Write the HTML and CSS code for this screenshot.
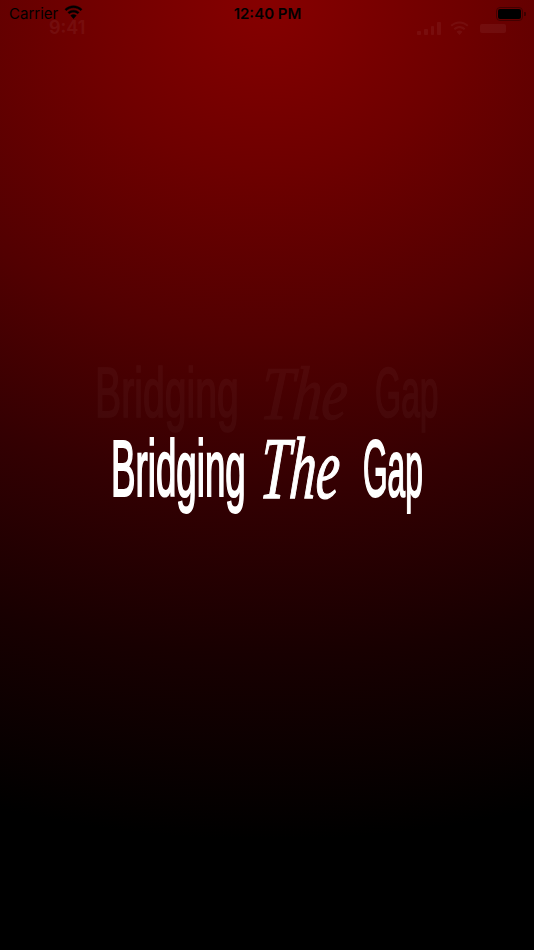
FILE: index.html
```html
<!DOCTYPE html>
<html lang="en">
<head>
<meta charset="utf-8">
<title>Bridging The Gap</title>
<link rel="stylesheet" href="styles.css">
</head>
<body>
<div class="page">
  <header class="status">
    <div class="status-left">
      <span class="carrier">Carrier</span>
      <svg class="wifi" viewBox="0 0 20 15" aria-hidden="true"><path d="M10 2.6c2.9 0 5.600 1.100 7.600 3l1.400-1.500C16.600 1.800 13.400.4 10 .4S3.400 1.800 1 4.100l1.400 1.500c2-1.900 4.700-3 7.600-3z"/><path d="M10 7.200c1.700 0 3.200.6 4.400 1.700l1.500-1.500C14.300 5.900 12.200 5 10 5s-4.300.9-5.900 2.400l1.500 1.500C6.800 7.800 8.300 7.200 10 7.200z"/><path d="M10 9.600c-1.100 0-2.100.4-2.900 1.100L10 14l2.900-3.300c-.8-.7-1.800-1.100-2.900-1.100z"/></svg>
    </div>
    <span class="time">12:40 PM</span>
    <div class="battery"><span class="battery-body"><span class="battery-fill"></span></span><span class="battery-cap"></span></div>
  </header>

  <div class="ghost-status">
    <span class="ghost-time">9:41</span>
    <div class="ghost-right">
      <div class="ghost-bars"><i class="b1"></i><i class="b2"></i><i class="b3"></i><i class="b4"></i></div>
      <svg class="ghost-wifi" viewBox="0 0 20 15" aria-hidden="true"><path d="M10 2.600c2.900 0 5.600 1.100 7.600 3l1.400-1.500C16.600 1.800 13.400.4 10 .4S3.400 1.800 1 4.100l1.400 1.500c2-1.900 4.700-3 7.600-3z"/><path d="M10 7.200c1.700 0 3.200.6 4.400 1.700l1.500-1.500C14.300 5.900 12.200 5 10 5s-4.300.9-5.900 2.400l1.500 1.500C6.800 7.800 8.300 7.200 10 7.200z"/><path d="M10 9.600c-1.100 0-2.100.4-2.900 1.100L10 14l2.900-3.300c-.8-.7-1.800-1.100-2.900-1.100z"/></svg>
      <span class="ghost-battery"></span>
    </div>
  </div>

  <div class="logo logo-ghost">
    <span class="word bridging"><span>Bridging</span></span>
    <span class="word the"><span>The</span></span>
    <span class="word gap"><span>Gap</span></span>
  </div>

  <main class="logo logo-main">
    <span class="word bridging"><span>Bridging</span></span>
    <span class="word the"><span>The</span></span>
    <span class="word gap"><span>Gap</span></span>
  </main>
</div>
</body>
</html>
```
FILE: styles.css
```css
* { box-sizing: border-box; }
html, body { margin: 0; padding: 0; background: #000; }
.page {
  position: relative;
  width: 534px;
  height: 950px;
  overflow: hidden;
  display: flex;
  flex-direction: column;
  background: radial-gradient(ellipse 1000px 840px at 267px 0, #860000 0%, #6e0000 20%, #520001 40%, #340002 58%, #180001 78%, #000 100%);
}
.status {
  display: grid;
  grid-template-columns: 1fr auto 1fr;
  align-items: center;
  height: 28px;
  padding: 0 8px 0 9px;
  color: #000;
  font: 15px/18px Inter, "Liberation Sans", sans-serif;
  flex: none;
}
.status-left { display: flex; align-items: center; gap: 6px; }
.carrier { font-size: 15px; color: #000; }
.wifi { width: 19px; height: 15px; margin-top: -4px; fill: #000; stroke: #000; stroke-width: .5; }
.time { font-weight: 600; font-size: 15px; }
.battery { justify-self: end; display: flex; align-items: center; }
.battery-body {
  display: block;
  width: 27px;
  height: 14px;
  padding: 1px;
  border: 1px solid #420000;
  border-radius: 4px;
}
.battery-fill { display: block; width: 100%; height: 100%; background: #000; border-radius: 2px; }
.battery-cap { width: 2px; height: 4px; background: #3a0000; border-radius: 0 1px 1px 0; margin-left: 1px; }

.ghost-status {
  position: absolute;
  left: 0;
  right: 0;
  top: 18px;
  height: 20px;
  display: flex;
  justify-content: space-between;
  align-items: center;
  padding: 0 28px 0 49px;
  color: #fff;
  opacity: .05;
}
.ghost-time { font: 600 18px/20px Inter, "Liberation Sans", sans-serif; }
.ghost-right { display: flex; align-items: center; gap: 8px; }
.ghost-bars { display: flex; align-items: flex-end; gap: 3px; height: 13px; }
.ghost-bars i { display: block; width: 3.75px; background: #fff; border-radius: 1px; }
.b1 { height: 4px; } .b2 { height: 6px; } .b3 { height: 9px; } .b4 { height: 13px; }
.ghost-wifi { width: 21px; height: 15px; fill: #fff; }
.ghost-battery { display: block; width: 26px; height: 9px; background: #fff; border-radius: 2px; margin-left: 2px; }

.logo {
  display: flex;
  color: #fff;
  line-height: 1;
  white-space: nowrap;
}
.word { display: block; flex: none; }
.word > span { display: inline-block; transform-origin: 0 0; }
.logo-main {
  margin-top: 391px;
  padding-left: 111px;
  height: 100px;
  align-items: flex-start;
}
.logo-main .bridging { width: 153px; }
.logo-main .the { width: 99px; }
.logo-main .gap { width: 60px; }
.logo-main .bridging > span {
  font: 400 79px/100px "Liberation Sans", Arial, sans-serif;
  transform: scaleX(.465);
  -webkit-text-stroke: 2.2px #fff;
}
.logo-main .gap > span {
  font: 400 79px/100px "Liberation Sans", Arial, sans-serif;
  transform: scaleX(.4);
  -webkit-text-stroke: 2.2px #fff;
}
.logo-main .the > span {
  font: italic 400 88px/100px "Liberation Serif", serif;
  transform: scaleX(.6) skewX(-6deg);
  -webkit-text-stroke: 1.4px #fff;
}
.logo-ghost {
  position: absolute;
  left: 95px;
  top: 348px;
  height: 90px;
  opacity: .03;
}
.logo-ghost .bridging { width: 170px; }
.logo-ghost .the { width: 110px; }
.logo-ghost .gap { width: 64px; }
.logo-ghost .bridging > span {
  font: 400 70px/90px "Liberation Sans", Arial, sans-serif;
  transform: scaleX(.56);
  -webkit-text-stroke: 1.6px #fff;
}
.logo-ghost .gap > span {
  font: 400 70px/90px "Liberation Sans", Arial, sans-serif;
  transform: scaleX(.48);
  -webkit-text-stroke: 1.6px #fff;
}
.logo-ghost .the > span {
  font: italic 400 76px/90px "Liberation Serif", serif;
  transform: scaleX(.76) skewX(-6deg);
  -webkit-text-stroke: 1.2px #fff;
}
```
